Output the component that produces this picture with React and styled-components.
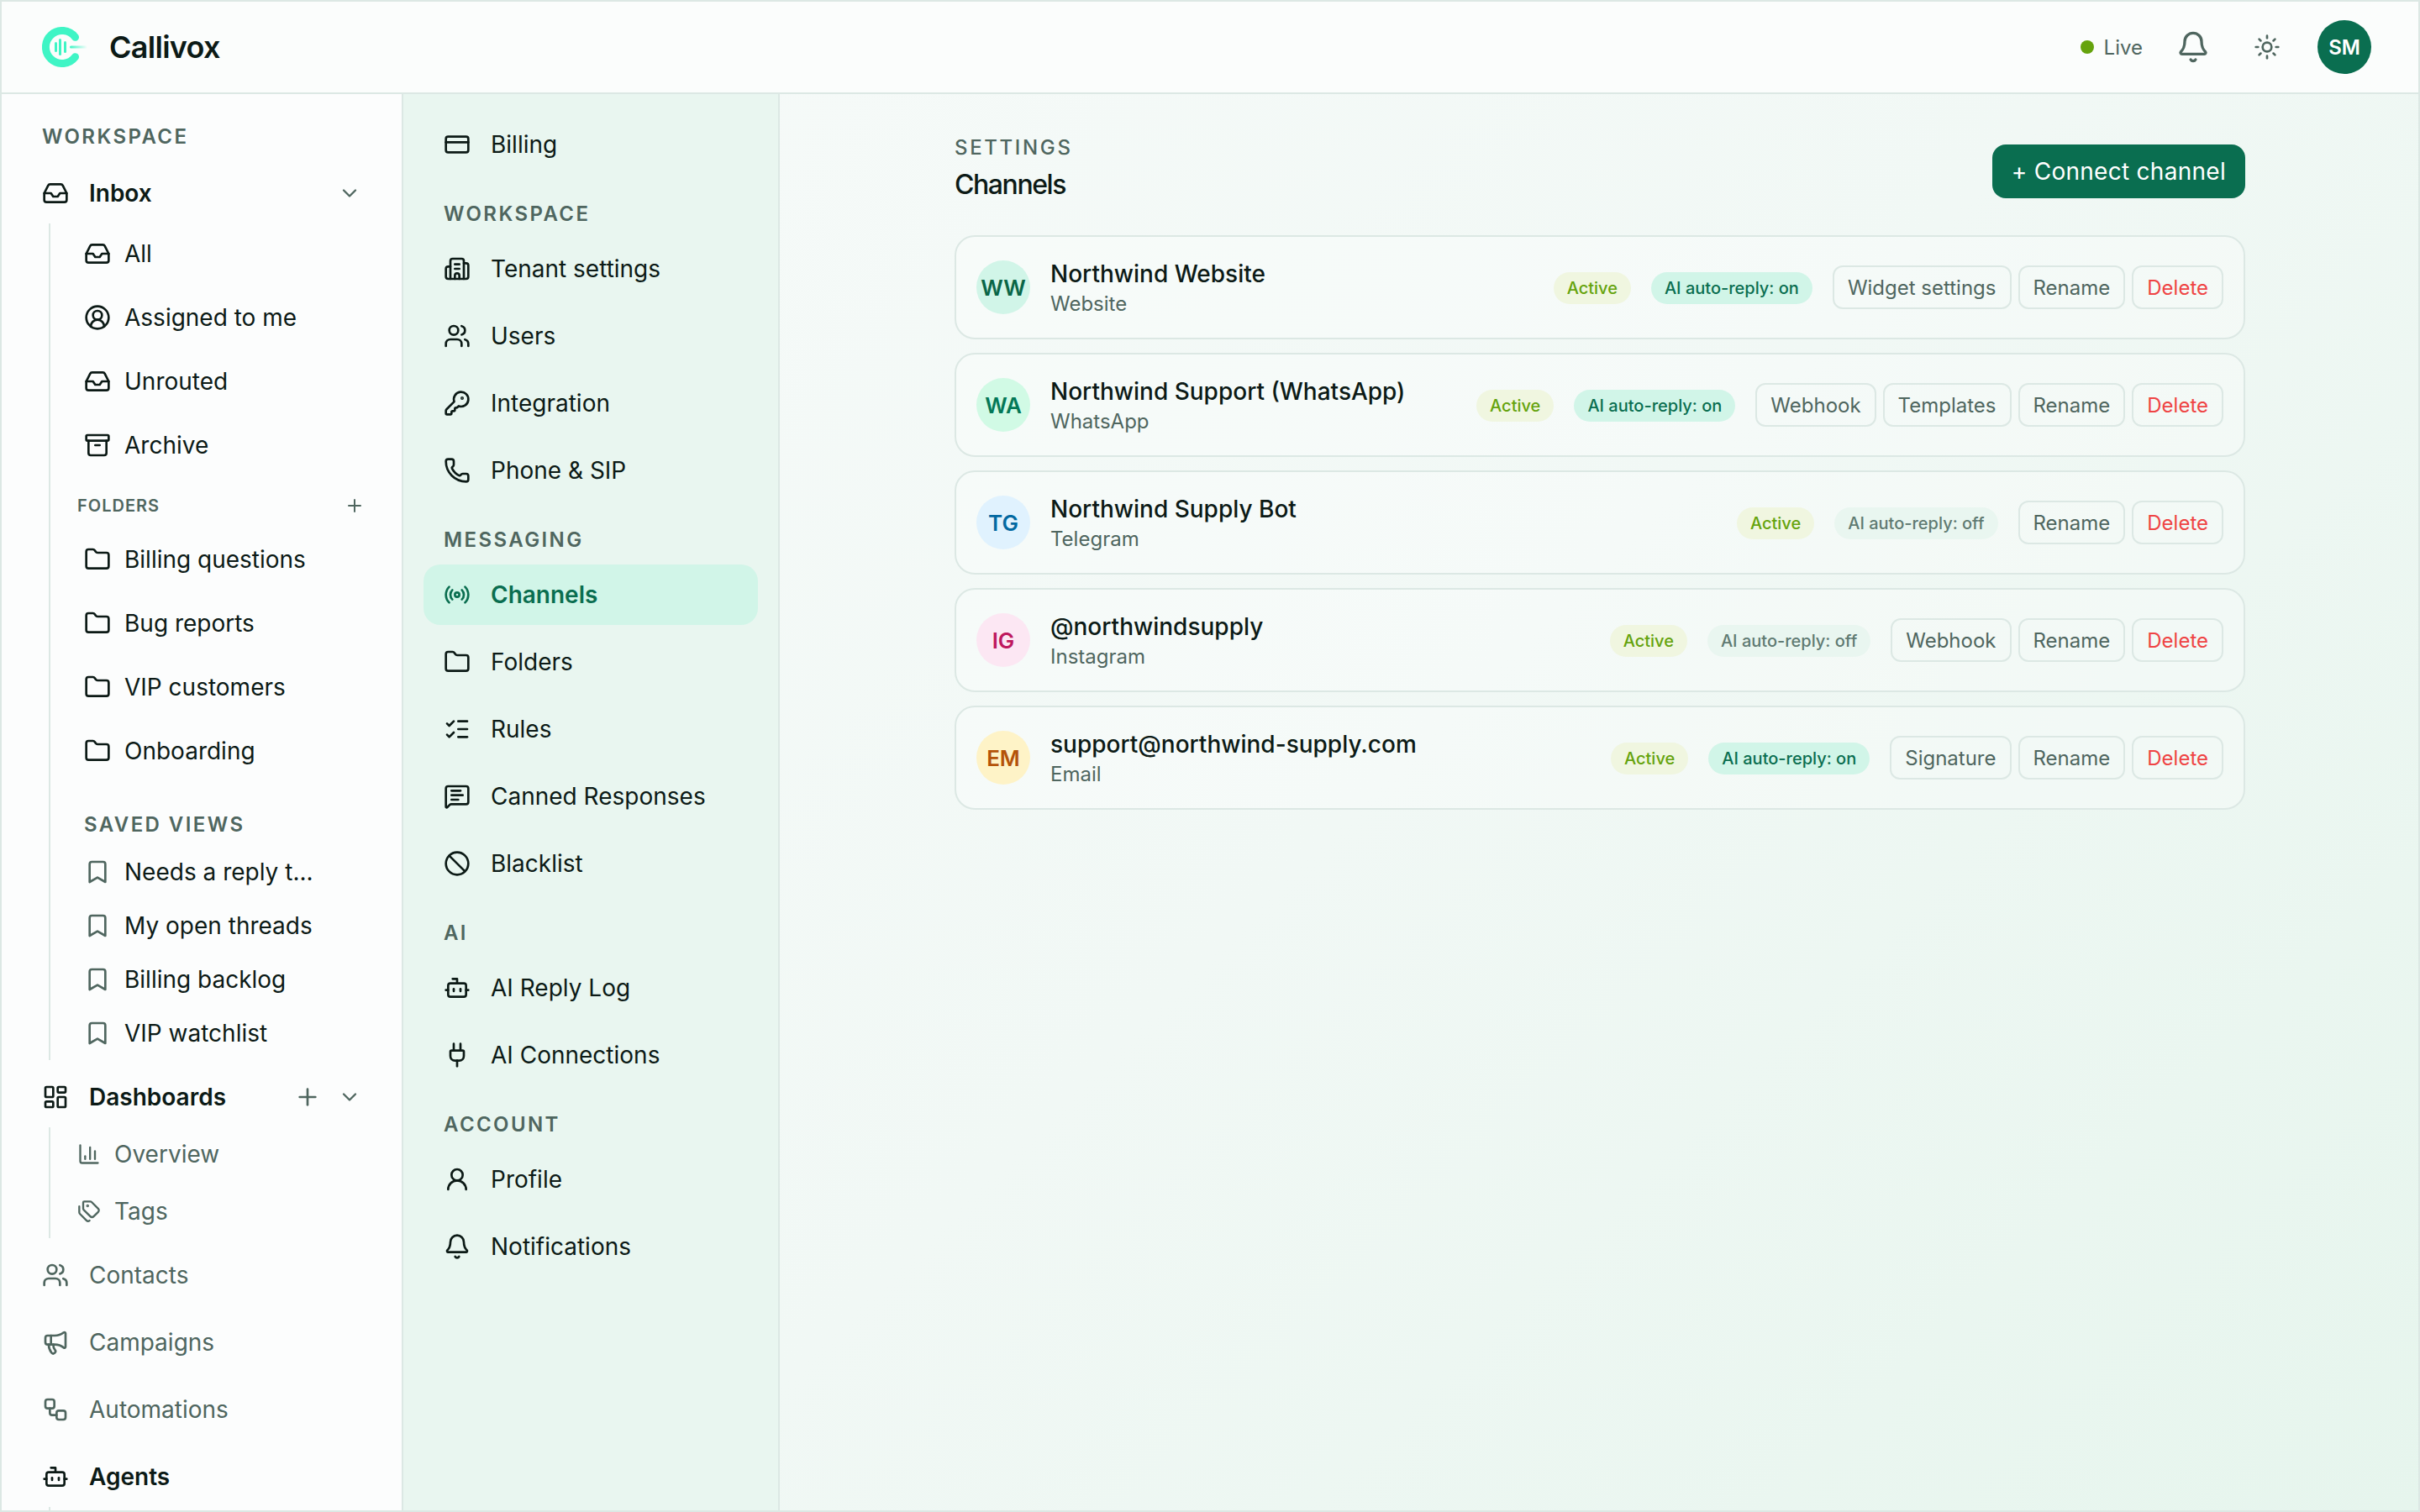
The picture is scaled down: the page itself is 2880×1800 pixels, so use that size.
import React from "react";
import styled, { createGlobalStyle } from "styled-components";
import {
  Archive,
  Ban,
  Bell,
  Bookmark,
  Bot,
  Building2,
  ChartColumn,
  ChevronDown,
  CircleUserRound,
  CreditCard,
  Folder,
  Inbox,
  KeyRound,
  LayoutDashboard,
  ListChecks,
  Megaphone,
  MessageSquareText,
  Phone,
  Plug,
  Plus,
  Radio,
  Sun,
  Tags,
  UserRound,
  Users,
  Workflow,
} from "lucide-react";

const ink = "#0c1a16";
const muted = "#4f665f";
const line = "#dce8e4";
const brand = "#0a6e50";

const GlobalStyle = createGlobalStyle`
  html, body {
    margin: 0;
    padding: 0;
    background: #f4f9f7;
  }
  body {
    font-family: Inter, "Noto Sans", sans-serif;
    color: ${ink};
    -webkit-font-smoothing: antialiased;
  }
  * {
    box-sizing: border-box;
  }
`;

const Shell = styled.div`
  width: 2880px;
  height: 1800px;
  border: 2px solid ${line};
  display: flex;
  flex-direction: column;
  overflow: hidden;
  background: linear-gradient(135deg, #f8fbfa 0%, #f1f8f5 55%, #e6f5ed 100%);
`;

const TopBar = styled.header`
  height: 110px;
  flex: none;
  border-bottom: 2px solid ${line};
  background: #fbfdfc;
  display: flex;
  align-items: center;
  padding: 0 56px 0 48px;
`;

const Brand = styled.div`
  display: flex;
  align-items: center;
  gap: 26px;
  font-size: 36px;
  font-weight: 600;
  letter-spacing: -0.02em;
  flex: 1;
`;

const TopActions = styled.div`
  display: flex;
  align-items: center;
`;

const LiveState = styled.div`
  display: flex;
  align-items: center;
  gap: 12px;
  font-size: 24px;
  color: ${muted};
  margin-right: 40px;
`;

const LiveDot = styled.span`
  width: 16px;
  height: 16px;
  border-radius: 50%;
  background: #65a30d;
`;

const TopIcon = styled.span`
  display: flex;
  color: ${muted};
  margin-right: ${(p) => p.$gap}px;
`;

const UserBadge = styled.div`
  width: 64px;
  height: 64px;
  border-radius: 50%;
  background: ${brand};
  color: #fff;
  font-size: 24px;
  font-weight: 600;
  display: flex;
  align-items: center;
  justify-content: center;
`;

const Body = styled.div`
  flex: 1;
  min-height: 0;
  display: flex;
`;

const MainNav = styled.nav`
  width: 478px;
  flex: none;
  background: #fcfdfd;
  border-right: 2px solid ${line};
  padding: 32px 24px 0;
  overflow: hidden;
  display: flex;
  flex-direction: column;
`;

const NavGroups = styled.div`
  display: flex;
  flex-direction: column;
  gap: 8px;
`;

const SectionLabel = styled.div`
  height: 36px;
  padding: 0 24px;
  display: flex;
  align-items: center;
  font-size: 24px;
  font-weight: 600;
  letter-spacing: 0.1em;
  text-transform: uppercase;
  color: ${muted};
  flex: none;
`;

const WorkspaceLabel = styled(SectionLabel)`
  margin-bottom: 14px;
`;

const TopRow = styled.div`
  height: 72px;
  flex: none;
  display: flex;
  align-items: center;
  gap: 24px;
  padding: 0 24px;
  font-size: 28px;
  font-weight: ${(p) => (p.$strong ? 600 : 400)};
  color: ${(p) => (p.$strong ? ink : muted)};
`;

const RowLabel = styled.span`
  flex: 1;
  white-space: nowrap;
`;

const RowTools = styled.span`
  display: flex;
  align-items: center;
  gap: 20px;
  color: ${muted};
`;

const Tree = styled.div`
  margin-left: 32px;
  border-left: 2px solid ${line};
  padding: 0 0 ${(p) => p.$tail || 0}px 16px;
  display: flex;
  flex-direction: column;
  gap: 4px;
  min-height: ${(p) => p.$min || 0}px;
`;

const TreeRow = styled.div`
  height: ${(p) => p.$height || 72}px;
  flex: none;
  display: flex;
  align-items: center;
  gap: 16px;
  padding: 0 ${(p) => p.$inset || 24}px;
  font-size: 28px;
  color: ${(p) => (p.$soft ? muted : ink)};
  white-space: nowrap;
`;

const TreeIcon = styled.span`
  display: flex;
  color: ${(p) => (p.$soft ? muted : ink)};
`;

const FoldersHead = styled.div`
  height: 48px;
  margin-top: 8px;
  padding: 0 20px 0 16px;
  display: flex;
  align-items: center;
  justify-content: space-between;
  font-size: 20px;
  font-weight: 600;
  letter-spacing: 0.05em;
  text-transform: uppercase;
  color: ${muted};
`;

const SavedLabel = styled(SectionLabel)`
  margin: 29px 0 5px;
`;

const SettingsNav = styled.nav`
  width: 448px;
  flex: none;
  background: #e9f6f0;
  border-right: 2px solid ${line};
  padding: 24px 24px 0;
  display: flex;
  flex-direction: column;
  gap: 8px;
  overflow: hidden;
`;

const SettingsLabel = styled(SectionLabel)`
  margin: 20px 0 4px;
`;

const SettingsRow = styled.div`
  height: 72px;
  flex: none;
  display: flex;
  align-items: center;
  gap: 24px;
  padding: 0 24px;
  border-radius: 20px;
  font-size: 28px;
  font-weight: ${(p) => (p.$active ? 600 : 400)};
  color: ${(p) => (p.$active ? brand : ink)};
  background: ${(p) => (p.$active ? "#d1f5e8" : "transparent")};
`;

const Main = styled.main`
  flex: 1;
  min-width: 0;
  padding: 48px 0 0 2px;
`;

const Content = styled.div`
  width: 1536px;
  margin: 0 auto;
`;

const PageHead = styled.div`
  height: 88px;
  margin-bottom: 32px;
  display: flex;
  align-items: center;
  justify-content: space-between;
`;

const Eyebrow = styled.div`
  font-size: 24px;
  line-height: 32px;
  font-weight: 500;
  letter-spacing: 0.11em;
  text-transform: uppercase;
  color: ${muted};
`;

const PageTitle = styled.h1`
  margin: 0;
  font-size: 32px;
  line-height: 56px;
  font-weight: 500;
  letter-spacing: -0.045em;
`;

const ConnectButton = styled.button`
  height: 64px;
  padding: 0 23px;
  border: 0;
  border-radius: 16px;
  background: ${brand};
  color: #fff;
  font-family: inherit;
  font-size: 28px;
  font-weight: 400;
  letter-spacing: 0.01em;
`;

const Channels = styled.div`
  display: flex;
  flex-direction: column;
  gap: 16px;
`;

const Card = styled.div`
  height: 124px;
  border: 2px solid ${line};
  border-radius: 24px;
  background: rgba(255, 255, 255, 0.3);
  padding: 0 24px;
  display: flex;
  align-items: center;
  gap: 24px;
`;

const Initials = styled.div`
  width: 64px;
  height: 64px;
  flex: none;
  border-radius: 50%;
  display: flex;
  align-items: center;
  justify-content: center;
  font-size: 26px;
  font-weight: 600;
  background: ${(p) => p.$bg};
  color: ${(p) => p.$fg};
`;

const ChannelInfo = styled.div`
  flex: 1;
  min-width: 0;
`;

const ChannelName = styled.div`
  font-size: 28px;
  line-height: 40px;
  font-weight: 500;
  white-space: nowrap;
`;

const ChannelKind = styled.div`
  font-size: 24px;
  line-height: 32px;
  color: ${muted};
`;

const Pill = styled.span`
  height: 38px;
  margin-top: 2px;
  padding: 0 16px;
  border-radius: 19px;
  display: inline-flex;
  align-items: center;
  flex: none;
  font-size: 20px;
  font-weight: 500;
  white-space: nowrap;
  background: ${(p) => p.$bg};
  color: ${(p) => p.$fg};
`;

const CardActions = styled.div`
  display: flex;
  gap: 8px;
`;

const GhostButton = styled.button`
  height: 52px;
  padding: 0 16px;
  border: 2px solid ${line};
  border-radius: 12px;
  background: transparent;
  font-family: inherit;
  font-size: 24px;
  white-space: nowrap;
  color: ${(p) => (p.$danger ? "#ef4444" : muted)};
`;

const CallivoxMark = () => (
  <svg width="54" height="48" viewBox="0 0 54 48" fill="none">
    <defs>
      <linearGradient id="markTail" x1="0" x2="1" y1="0" y2="0">
        <stop offset="0" stopColor="#3ff5c5" />
        <stop offset="1" stopColor="#3ff5c5" stopOpacity="0" />
      </linearGradient>
    </defs>
    <path
      d="M39.5 12.3A19.5 19.5 0 1 0 39.5 35.7"
      stroke="#3ff5c5"
      strokeWidth="9"
      strokeLinecap="round"
    />
    <rect x="15" y="18" width="3" height="12" rx="1.5" fill="#3ff5c5" />
    <rect x="20" y="14" width="3" height="20" rx="1.5" fill="#3ff5c5" />
    <rect x="26" y="17" width="3" height="14" rx="1.5" fill="#3ff5c5" />
    <rect x="33" y="22.5" width="21" height="3" rx="1.5" fill="url(#markTail)" />
  </svg>
);

const inboxItems = [
  { icon: Inbox, label: "All" },
  { icon: CircleUserRound, label: "Assigned to me" },
  { icon: Inbox, label: "Unrouted" },
  { icon: Archive, label: "Archive" },
];

const folders = ["Billing questions", "Bug reports", "VIP customers", "Onboarding"];
const savedViews = ["Needs a reply t...", "My open threads", "Billing backlog", "VIP watchlist"];

const settingsNav = [
  { items: [{ icon: CreditCard, label: "Billing" }] },
  {
    title: "Workspace",
    items: [
      { icon: Building2, label: "Tenant settings" },
      { icon: Users, label: "Users" },
      { icon: KeyRound, label: "Integration" },
      { icon: Phone, label: "Phone & SIP" },
    ],
  },
  {
    title: "Messaging",
    items: [
      { icon: Radio, label: "Channels", active: true },
      { icon: Folder, label: "Folders" },
      { icon: ListChecks, label: "Rules" },
      { icon: MessageSquareText, label: "Canned Responses" },
      { icon: Ban, label: "Blacklist" },
    ],
  },
  {
    title: "AI",
    items: [
      { icon: Bot, label: "AI Reply Log" },
      { icon: Plug, label: "AI Connections" },
    ],
  },
  {
    title: "Account",
    items: [
      { icon: UserRound, label: "Profile" },
      { icon: Bell, label: "Notifications" },
    ],
  },
];

const channels = [
  { initials: "WW", bg: "#d1f5e8", fg: "#0a6647", name: "Northwind Website", kind: "Website", ai: true, actions: ["Widget settings"] },
  { initials: "WA", bg: "#d1fae5", fg: "#047857", name: "Northwind Support (WhatsApp)", kind: "WhatsApp", ai: true, actions: ["Webhook", "Templates"] },
  { initials: "TG", bg: "#e0f2fe", fg: "#0369a1", name: "Northwind Supply Bot", kind: "Telegram", ai: false, actions: [] },
  { initials: "IG", bg: "#fce7f3", fg: "#be185d", name: "@northwindsupply", kind: "Instagram", ai: false, actions: ["Webhook"] },
  { initials: "EM", bg: "#fef3c7", fg: "#b45309", name: "support@northwind-supply.com", kind: "Email", ai: true, actions: ["Signature"] },
];

function PrimaryNav() {
  return (
    <MainNav>
      <WorkspaceLabel>Workspace</WorkspaceLabel>
      <NavGroups>
        <div>
          <TopRow $strong>
            <Inbox size={32} />
            <RowLabel>Inbox</RowLabel>
            <RowTools>
              <ChevronDown size={28} />
            </RowTools>
          </TopRow>
          <Tree $tail={2}>
            {inboxItems.map((item) => (
              <TreeRow key={item.label}>
                <item.icon size={32} />
                {item.label}
              </TreeRow>
            ))}
            <FoldersHead>
              Folders
              <Plus size={24} />
            </FoldersHead>
            {folders.map((name) => (
              <TreeRow key={name}>
                <Folder size={32} />
                {name}
              </TreeRow>
            ))}
            <SavedLabel>Saved views</SavedLabel>
            {savedViews.map((name) => (
              <TreeRow key={name} $height={60}>
                <TreeIcon $soft>
                  <Bookmark size={32} />
                </TreeIcon>
                {name}
              </TreeRow>
            ))}
          </Tree>
        </div>
        <div>
          <TopRow $strong>
            <LayoutDashboard size={32} />
            <RowLabel>Dashboards</RowLabel>
            <RowTools>
              <Plus size={32} />
              <ChevronDown size={28} />
            </RowTools>
          </TopRow>
          <Tree>
            <TreeRow $height={64} $inset={16} $soft>
              <ChartColumn size={28} />
              Overview
            </TreeRow>
            <TreeRow $height={64} $inset={16} $soft>
              <Tags size={28} />
              Tags
            </TreeRow>
          </Tree>
        </div>
        <TopRow>
          <Users size={32} />
          <RowLabel>Contacts</RowLabel>
        </TopRow>
        <TopRow>
          <Megaphone size={32} />
          <RowLabel>Campaigns</RowLabel>
        </TopRow>
        <TopRow>
          <Workflow size={32} />
          <RowLabel>Automations</RowLabel>
        </TopRow>
        <div>
          <TopRow $strong>
            <Bot size={32} />
            <RowLabel>Agents</RowLabel>
          </TopRow>
          <Tree $min={40} />
        </div>
      </NavGroups>
    </MainNav>
  );
}

function SecondaryNav() {
  return (
    <SettingsNav>
      {settingsNav.map((section, i) => (
        <React.Fragment key={i}>
          {section.title && <SettingsLabel>{section.title}</SettingsLabel>}
          {section.items.map((item) => (
            <SettingsRow key={item.label} $active={item.active}>
              <item.icon size={32} />
              {item.label}
            </SettingsRow>
          ))}
        </React.Fragment>
      ))}
    </SettingsNav>
  );
}

function ChannelCard({ channel }) {
  return (
    <Card>
      <Initials $bg={channel.bg} $fg={channel.fg}>
        {channel.initials}
      </Initials>
      <ChannelInfo>
        <ChannelName>{channel.name}</ChannelName>
        <ChannelKind>{channel.kind}</ChannelKind>
      </ChannelInfo>
      <Pill $bg="#f0f6e0" $fg="#65a30d">
        Active
      </Pill>
      {channel.ai ? (
        <Pill $bg="#d1f5e8" $fg={brand}>
          AI auto-reply: on
        </Pill>
      ) : (
        <Pill $bg="#e9f6f0" $fg="#5f7a72">
          AI auto-reply: off
        </Pill>
      )}
      <CardActions>
        {channel.actions.map((action) => (
          <GhostButton key={action}>{action}</GhostButton>
        ))}
        <GhostButton>Rename</GhostButton>
        <GhostButton $danger>Delete</GhostButton>
      </CardActions>
    </Card>
  );
}

export default function App() {
  return (
    <>
      <GlobalStyle />
      <Shell>
        <TopBar>
          <Brand>
            <CallivoxMark />
            Callivox
          </Brand>
          <TopActions>
            <LiveState>
              <LiveDot />
              Live
            </LiveState>
            <TopIcon $gap={52}>
              <Bell size={40} />
            </TopIcon>
            <TopIcon $gap={44}>
              <Sun size={32} />
            </TopIcon>
            <UserBadge>SM</UserBadge>
          </TopActions>
        </TopBar>
        <Body>
          <PrimaryNav />
          <SecondaryNav />
          <Main>
            <Content>
              <PageHead>
                <div>
                  <Eyebrow>Settings</Eyebrow>
                  <PageTitle>Channels</PageTitle>
                </div>
                <ConnectButton>+ Connect channel</ConnectButton>
              </PageHead>
              <Channels>
                {channels.map((channel) => (
                  <ChannelCard key={channel.initials} channel={channel} />
                ))}
              </Channels>
            </Content>
          </Main>
        </Body>
      </Shell>
    </>
  );
}
